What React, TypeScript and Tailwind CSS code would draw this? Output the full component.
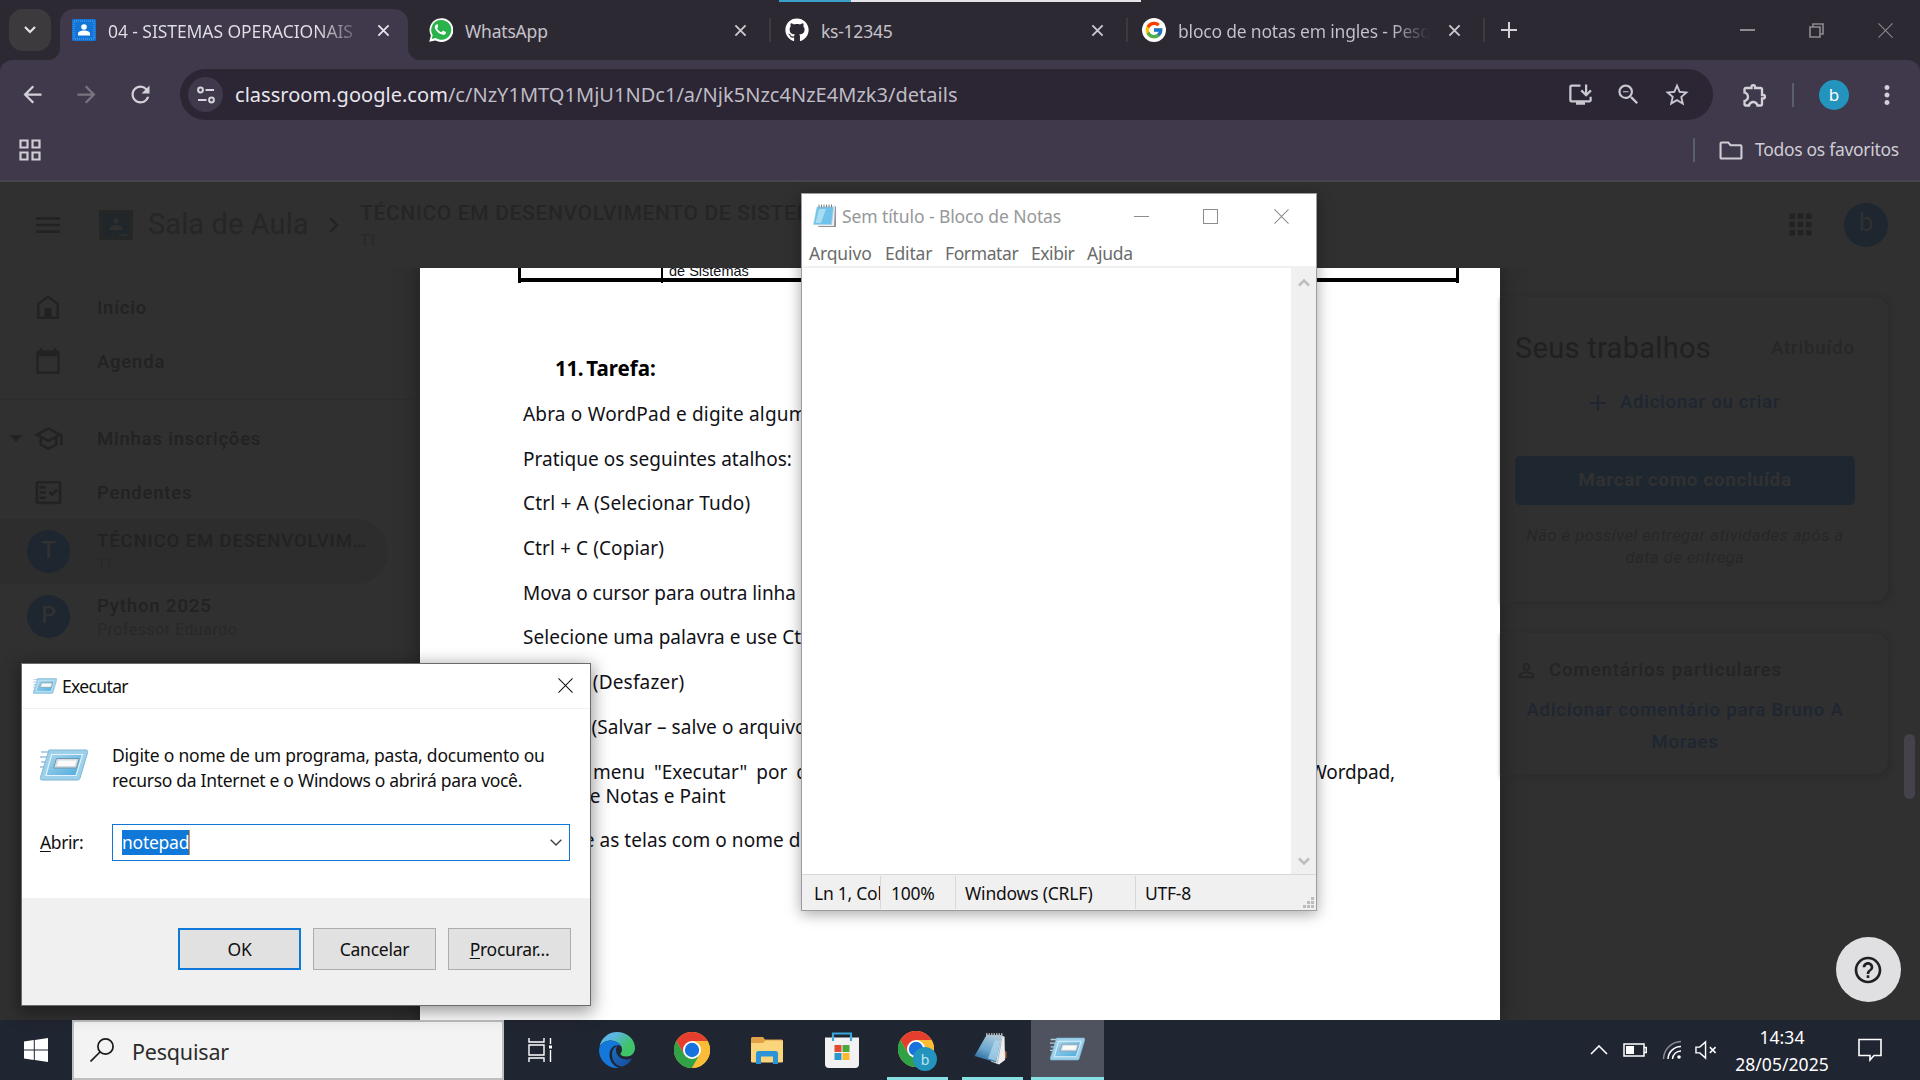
import React from "react";
import { FaGithub } from "react-icons/fa";
import { FcGoogle } from "react-icons/fc";
import {
  MdOutlineInstallDesktop,
  MdZoomOut,
  MdStarOutline,
  MdOutlineExtension,
  MdMoreVert,
  MdArrowBack,
  MdArrowForward,
  MdRefresh,
  MdMenu,
  MdApps,
  MdOutlineSchool,
  MdOutlineFactCheck,
  MdPersonOutline,
  MdHelpOutline,
  MdArrowDropDown,
  MdCalendarToday,
} from "react-icons/md";

/* ---------- drawings ---------- */

function CloseX({ className = "" }: { className?: string }) {
  return (
    <svg viewBox="0 0 14 14" className={className} fill="none" stroke="currentColor" strokeWidth="2">
      <path d="M1.5 1.5l11 11M12.5 1.5l-11 11" />
    </svg>
  );
}

function ThinX({ className = "" }: { className?: string }) {
  return (
    <svg viewBox="0 0 16 16" className={className} fill="none" stroke="currentColor" strokeWidth="1.1">
      <path d="M.5.5l15 15M15.5.5l-15 15" />
    </svg>
  );
}

function WhatsAppIcon() {
  return (
    <svg viewBox="0 0 24 24" className="size-6">
      <path fill="#fff" d="M.2 23.8l1.7-6.2A11.9 11.9 0 1112.1 24a12 12 0 01-5.7-1.5z" />
      <path fill="#29b34a" d="M12.1 2a9.9 9.9 0 00-8.4 15.1l-1 3.9 4-1A9.9 9.9 0 1012.1 2z" />
      <path
        fill="#fff"
        d="M8.9 6.9c-.3-.6-.5-.6-.8-.6-.6 0-1 .2-1.4.7-.5.6-.9 1.300-.8 2.400.1 1.100.8 2.200 1 2.500.2.200 1.900 3 4.700 4.100 2.300.9 2.800.700 3.300.700.500-.1 1.600-.700 1.900-1.300.2-.700.2-1.200.1-1.300l-2.600-1.300c-.3-.1-.5-.1-.7.1l-1 1.200c-.2.200-.3.200-.6.100-1.800-.8-3-2-3.800-3.600-.1-.3 0-.400.100-.600l.700-.9c.1-.2.100-.300 0-.5z"
      />
    </svg>
  );
}

function ClassroomFavicon() {
  return (
    <svg viewBox="0 0 24 22" className="h-[22px] w-6 shrink-0">
      <rect width="24" height="22" rx="1.500" fill="#1275d8" />
      <rect x="2" y="2" width="20" height="18" fill="none" stroke="#5fa5ea" strokeWidth="1" strokeDasharray="1 1" />
      <circle cx="12" cy="8" r="2.800" fill="#fff" />
      <path d="M6 16.500v-1.800c0-2 3-3.200 6-3.200s6 1.200 6 3.200v1.800z" fill="#fff" />
    </svg>
  );
}

function TuneIcon() {
  return (
    <svg viewBox="0 0 20 20" className="size-5" fill="none" stroke="#d6d4dc" strokeWidth="2">
      <circle cx="4.500" cy="5" r="2.400" />
      <path d="M9.500 5H18M2 15h8.500" />
      <circle cx="15.500" cy="15" r="2.400" />
    </svg>
  );
}

function ChromeIcon({ className = "" }: { className?: string }) {
  return (
    <svg viewBox="0 0 48 48" className={className}>
      <circle cx="24" cy="24" r="24" fill="#fbc02d" />
      <path d="M3.200 12A24 24 0 0144.800 12H24L13.600 30z" fill="#e53e2f" />
      <path d="M3.200 12A24 24 0 0024 48l10.400-18-20.800 0z" fill="#2fa146" />
      <path d="M44.800 12A24 24 0 0124 48l10.400-18L33 14l-9-2z" fill="#fbbd36" />
      <circle cx="24" cy="24" r="12" fill="#fff" />
      <circle cx="24" cy="24" r="9.600" fill="#1673de" />
    </svg>
  );
}

function EdgeIcon() {
  return (
    <svg viewBox="0 0 36 36" className="size-9">
      <defs>
        <linearGradient id="edgeTop" x1="0" y1="0" x2="1" y2="0.700">
          <stop offset="0.350" stopColor="#5bb5e2" />
          <stop offset="0.800" stopColor="#3fc36a" />
        </linearGradient>
        <linearGradient id="edgeDark" x1="0" y1="0" x2="1" y2="1">
          <stop offset="0" stopColor="#1a6fc0" />
          <stop offset="1" stopColor="#174a9c" />
        </linearGradient>
      </defs>
      <path d="M.5 15C2 6 9.500 0 18 0c10 0 18 7 18 16 0 5-4 8.500-8.500 8.500-4 0-6-1.500-6-2.500s1.500-1.500 1.500-4.500C23 12 17 8.500 11.500 8.500 6 8.500 2 11.500.5 15z" fill="url(#edgeTop)" />
      <path d="M0 18c.5-6 5.500-9.500 11.500-9.500 5 0 9 2.500 11 6-1-.8-2.500-1.200-4-1.200-5 0-8 4.700-8 9.700 0 6 4 11 9 13C9 36.800 0 28.500 0 18z" fill="#1378da" />
      <path d="M18.500 14c-3.500 1-5.500 4.500-5.500 8.500 0 7 5 12.500 11 12 4-1.500 7.200-4.500 9-8-8 3-16-1-16-8.500 0-2 .5-3 1.500-4z" fill="url(#edgeDark)" />
    </svg>
  );
}

function FolderIcon() {
  return (
    <svg viewBox="0 0 32 28" className="h-7 w-8">
      <path d="M0 2.500A1.500 1.500 0 011.500 1H12l2 2.500h16.500A1.500 1.500 0 0132 5v21H0z" fill="#e0a147" />
      <path d="M0 7h12l2.500-2.500H32V25a1.500 1.500 0 01-1.500 1.500h-29A1.500 1.500 0 010 25z" fill="#fbd57c" />
      <path d="M5 28V17.500A2.500 2.500 0 017.500 15h17a2.500 2.500 0 012.500 2.500V28h-5v-7.500H10V28z" fill="#2b93d6" />
    </svg>
  );
}

function StoreIcon() {
  return (
    <svg viewBox="0 0 36 36" className="size-9">
      <path d="M9 8V1.500h18V8" fill="none" stroke="#3aa7dc" strokeWidth="2.200" />
      <path d="M1 5.500h34V32a4 4 0 01-4 4H5a4 4 0 01-4-4z" fill="#f2f2f2" />
      <path d="M9 9V5.500M27 9V5.500" stroke="#3aa7dc" strokeWidth="2.200" />
      <rect x="10.500" y="13" width="7" height="7" fill="#e04a33" />
      <rect x="18.500" y="13" width="7" height="7" fill="#4aa83a" />
      <rect x="10.500" y="21" width="7" height="7" fill="#2b97cf" />
      <rect x="18.500" y="21" width="7" height="7" fill="#fbb92d" />
    </svg>
  );
}

function RunIcon({ className = "" }: { className?: string }) {
  return (
    <svg viewBox="0 0 48 32" className={className}>
      <defs>
        <linearGradient id="runFace" x1="0" y1="0" x2="1" y2="1">
          <stop offset="0" stopColor="#a9d7ee" />
          <stop offset="1" stopColor="#4eabdd" />
        </linearGradient>
      </defs>
      <path d="M1 3h12M0 8h11M1 13h9M0 18h9" stroke="#b4cfdf" strokeWidth="1.800" />
      <path d="M9 1h37c1.500 0 2 1 1.600 2.500L40 29c-.4 1.500-1 2-2.500 2H2c-1.500 0-2-1-1.600-2.500z" fill="#9dd0ea" stroke="#7fb6d3" strokeWidth="1" />
      <path d="M11.500 5.500h31l-6.500 21H6z" fill="url(#runFace)" stroke="#e4f3fa" strokeWidth="1.200" />
      <path d="M16.500 9.500H39L36.500 19H13.500z" fill="#d3dce2" stroke="#6f96ad" strokeWidth="1" />
      <path d="M18.500 11.500h18L34.500 17H16.500z" fill="#fafafa" />
    </svg>
  );
}

function NotepadIcon() {
  return (
    <svg viewBox="0 0 24 24" className="size-6">
      <path d="M5 23h18V2.500L21 1.500z" fill="#9a8f95" />
      <path d="M4 22h17L22 2H7z" fill="#e8eef2" />
      <path d="M4 3h16.500L18.500 20.500H.5z" fill="#6fc3ea" stroke="#a9cfe0" strokeWidth=".6" />
      <path d="M6 5h7L8 19H2.500z" fill="#a9dcf3" />
      <path d="M6 .5v3M8.500.5v3M11 .5v3M13.500.5v3M16 .5v3M18.500.5v3" stroke="#7c8388" strokeWidth="1" />
    </svg>
  );
}

function NotepadTaskIcon() {
  return (
    <svg viewBox="0 0 34 34" className="size-[34px]">
      <defs>
        <linearGradient id="padFace" x1="0.600" y1="0" x2="0.200" y2="1">
          <stop offset="0" stopColor="#a9c6d8" />
          <stop offset="0.500" stopColor="#6da9cf" />
          <stop offset="1" stopColor="#235f93" />
        </linearGradient>
      </defs>
      <path d="M30 18l2.500 2v6l-2.500 1z" fill="#b06a3a" />
      <path d="M26 3.500l4.500 1L31 28l-6 4.500-8-3z" fill="#eceeef" />
      <path d="M28 5l-4.500 26" stroke="#b4b8bc" strokeWidth="1" />
      <path d="M12.500 3H28l-6 27.500L.5 24z" fill="url(#padFace)" />
      <path d="M21 8l5 1-4 20-8-2.500z" fill="#b4daee" opacity=".7" />
      <path d="M12 2.500h17" stroke="#b9b9b9" strokeWidth="2.500" strokeDasharray="1.500 1" />
    </svg>
  );
}

/* ---------- browser ---------- */

function TabStrip() {
  return (
    <div className="relative flex h-[60px] shrink-0 bg-[#2d2933]">
      <div className="ml-[9px] mt-[9px] flex h-[42px] w-[42px] items-center justify-center rounded-[14px] bg-[#3c3a3d]">
        <svg viewBox="0 0 12 8" className="h-2 w-3" fill="none" stroke="#e5e5e8" strokeWidth="2.200">
          <path d="M1 1l5 5 5-5" />
        </svg>
      </div>
      <div className="relative ml-[9px] mt-[9px] flex h-[51px] w-[348px] items-center rounded-t-[14px] bg-[#40384b] pb-[9px] pl-3">
        <svg viewBox="0 0 12 12" className="absolute bottom-0 -left-3 size-3">
          <path d="M12 0v12H0A12 12 0 0012 0z" fill="#40384b" />
        </svg>
        <svg viewBox="0 0 12 12" className="absolute -right-3 bottom-0 size-3">
          <path d="M0 0v12h12A12 12 0 010 0z" fill="#40384b" />
        </svg>
        <ClassroomFavicon />
        <div className="mt-[3px] ml-3 w-[246px] overflow-hidden bg-linear-to-r from-[#e2e0e6] from-85% to-[#6b6475] bg-clip-text text-[17.5px] tracking-[-0.08px] whitespace-nowrap text-transparent">
          04 - SISTEMAS OPERACIONAIS
        </div>
        <CloseX className="ml-[23px] size-[13px] text-[#e5e3e9]" />
      </div>
      <div className="flex w-[361px] items-center pl-[21px]">
        <WhatsAppIcon />
        <span className="ml-3 w-[269px] pt-[3px] text-[17.5px] tracking-[-0.2px] text-[#c5c2cb]">WhatsApp</span>
        <CloseX className="size-[13px] text-[#cbc9d0]" />
      </div>
      <div className="mt-[18px] h-6 w-[2px] bg-[#3e3a40]" />
      <div className="flex w-[355px] items-center pl-[14px]">
        <FaGithub className="size-6 text-white" />
        <span className="ml-3 w-[270px] pt-[3px] text-[17.5px] tracking-[-0.25px] text-[#c5c2cb]">ks-12345</span>
        <CloseX className="size-[13px] text-[#cbc9d0]" />
      </div>
      <div className="mt-[18px] h-6 w-[2px] bg-[#3e3a40]" />
      <div className="flex w-[355px] items-center pl-[14px]">
        <span className="flex size-6 items-center justify-center rounded-full bg-white">
          <FcGoogle className="size-5" />
        </span>
        <div className="ml-3 w-[252px] overflow-hidden bg-linear-to-r from-[#c5c2cb] from-85% to-[#2d2933] bg-clip-text pt-[3px] text-[17.5px] tracking-[-0.2px] whitespace-nowrap text-transparent">
          bloco de notas em ingles - Pesquisa
        </div>
        <CloseX className="ml-[18px] size-[13px] text-[#cbc9d0]" />
      </div>
      <div className="mt-[18px] h-6 w-[2px] bg-[#3e3a40]" />
      <svg viewBox="0 0 16 16" className="mt-[22px] ml-4 size-4" stroke="#d5d3da" strokeWidth="2">
        <path d="M8 0v16M0 8h16" />
      </svg>
      <div className="mr-[27px] ml-auto flex items-center gap-[54px] text-[#8e8b92]">
        <div className="h-[2px] w-[15px] bg-[#8e8b92]" />
        <svg viewBox="0 0 15 15" className="size-[15px]" fill="none" stroke="currentColor" strokeWidth="1.600">
          <path d="M1 4h10v10H1zM4 4V1h10v10h-3" />
        </svg>
        <ThinX className="size-[15px]" />
      </div>
      <div className="absolute top-0 left-[779px] flex h-[2px] w-[362px] bg-[#e4e4e9]">
        <div className="w-[72px] bg-[#3ba0cb]" />
      </div>
    </div>
  );
}

function Toolbar() {
  return (
    <div className="h-[122px] shrink-0 bg-[#2d2933]">
      <div className="flex h-full flex-col rounded-t-[12px] border-b-2 border-[#4a4650] bg-[#40384b]">
        <div className="flex h-[69px] items-center text-[#d3d1d8]">
          <MdArrowBack className="ml-[19px] size-[27px]" />
          <MdArrowForward className="ml-[27px] size-[27px] text-[#79747f]" />
          <MdRefresh className="ml-[27px] size-[27px]" />
          <div className="ml-[26px] flex h-[51px] w-[1533px] items-center rounded-full bg-[#2b2534]">
            <div className="ml-2 flex size-[35px] items-center justify-center rounded-full bg-[#40384b]">
              <TuneIcon />
            </div>
            <div className="ml-[12px] text-[20px] tracking-[0.03px] whitespace-nowrap text-[#bfbcc4]">
              <span className="text-[#e8e6ec]">classroom.google.com</span>/c/NzY1MTQ1MjU1NDc1/a/Njk5Nzc4NzE4Mzk3/details
            </div>
            <div className="mr-[22px] ml-auto flex items-center gap-[21px] text-[#cac8cf]">
              <MdOutlineInstallDesktop className="size-[27px]" />
              <MdZoomOut className="size-[27px]" />
              <MdStarOutline className="size-[28px]" />
            </div>
          </div>
          <MdOutlineExtension className="ml-[28px] size-[28px]" />
          <div className="ml-[23px] h-6 w-[2px] bg-[#58606e]" />
          <div className="ml-[25px] flex size-[30px] items-center justify-center rounded-full bg-[#2394bd] text-[17px] text-white">b</div>
          <MdMoreVert className="ml-[23px] size-[30px]" />
        </div>
        <div className="flex h-[42px] items-center text-[#cfcdd4]">
          <svg viewBox="0 0 22 22" className="ml-[19px] size-[22px]" fill="none" stroke="currentColor" strokeWidth="2.200">
            <path d="M1.500 1.500h7v7h-7zM13.500 1.500h7v7h-7zM1.500 13.500h7v7h-7zM13.500 13.500h7v7h-7z" />
          </svg>
          <div className="ml-auto h-6 w-[2px] bg-[#58606e]" />
          <svg viewBox="0 0 24 20" className="ml-6 h-[19px] w-6" fill="none" stroke="currentColor" strokeWidth="2.200">
            <path d="M2 1.500h7l2.500 3H22c.600 0 1 .400 1 1v12c0 .600-.400 1-1 1H2c-.600 0-1-.400-1-1v-15c0-.600.400-1 1-1z" />
          </svg>
          <span className="mr-[21px] ml-3 w-[144px] pb-px text-[17.500px] tracking-[-0.300px] whitespace-nowrap">Todos os favoritos</span>
        </div>
      </div>
    </div>
  );
}

/* ---------- dimmed classroom page ---------- */

function PageHeader() {
  return (
    <div className="flex h-[86px] shrink-0 items-center border-b border-[#2e2e2e] text-[#222]">
      <MdMenu className="ml-[32px] size-8" />
      <svg viewBox="0 0 34 30" className="ml-[35px] h-[30px] w-[34px]">
        <rect width="34" height="30" rx="2" fill="#252626" />
        <rect x="4" y="4" width="26" height="22" fill="#21262a" />
        <circle cx="17" cy="11" r="2.500" fill="#303030" />
        <path d="M10.500 20v-1.500c0-2 3.500-3.300 6.500-3.300s6.500 1.300 6.500 3.300V20z" fill="#303030" />
        <path d="M20 25h8" stroke="#303030" strokeWidth="1.500" />
      </svg>
      <span className="ml-[15px] w-[161px] font-[Roboto] text-[29px] tracking-[0.100px] whitespace-nowrap text-[#262626]">Sala de Aula</span>
      <svg viewBox="0 0 10 16" className="ml-[20px] h-4 w-[10px]" fill="none" stroke="currentColor" strokeWidth="2">
        <path d="M1 1l7 7-7 7" />
      </svg>
      <div className="ml-[21px] pt-[3px] font-[Roboto] leading-none text-[#252525]">
        <div className="text-[21px] font-medium tracking-[0.650px]">TÉCNICO EM DESENVOLVIMENTO DE SISTEMAS</div>
        <div className="mt-2 text-[17px] tracking-[0.500px] text-[#282828]">TI</div>
      </div>
      <MdApps className="ml-auto size-[33px]" />
      <div className="mr-8 ml-[27px] flex size-11 items-center justify-center rounded-full bg-[#1e2730] pb-1 font-[Roboto] text-[26px] text-[#303030]">b</div>
    </div>
  );
}

function SideItem({ icon, label }: { icon: React.ReactNode; label: string }) {
  return (
    <div className="flex h-[54px] items-center">
      <div className="flex w-[97px] justify-center pr-px">{icon}</div>
      <span className="pt-[3px] font-[Roboto] text-[18.500px] font-medium tracking-[0.800px]">{label}</span>
    </div>
  );
}

function CourseItem({ letter, title, sub, active }: { letter: string; title: string; sub: string; active?: boolean }) {
  return (
    <div className={active ? "flex h-[65px] w-[388px] items-center rounded-r-full bg-[#2d2d2d]" : "flex h-[65px] w-[388px] items-center"}>
      <div className="ml-[27px] flex size-[43px] shrink-0 items-center justify-center rounded-full bg-[#1e2730] font-[Roboto] text-[23px] font-medium text-[#313131]">
        {letter}
      </div>
      <div className="ml-[27px] pt-[2px] font-[Roboto] leading-none">
        <div className="text-[18.500px] font-medium tracking-[0.880px] whitespace-nowrap">{title}</div>
        <div className="mt-[6px] text-[16px] tracking-[0.480px] text-[#282828]">{sub}</div>
      </div>
    </div>
  );
}

function Sidebar() {
  return (
    <div className="w-[420px] shrink-0 overflow-hidden text-[#222]">
      <div className="h-[132px] border-b border-[#2c2c2c] pt-[12px]">
        <SideItem
          icon={
            <svg viewBox="0 0 22 24" className="h-6 w-[22px]" fill="none" stroke="currentColor" strokeWidth="2.400">
              <path d="M1.200 22.800V9L11 1.500 20.800 9v13.800z" />
              <path d="M7.500 13h7v10h-7z" fill="currentColor" stroke="none" />
            </svg>
          }
          label="Início"
        />
        <SideItem icon={<MdCalendarToday className="size-[28px]" />} label="Agenda" />
      </div>
      <div className="relative pt-[11px]">
        <MdArrowDropDown className="absolute top-[22px] left-0 size-8" />
        <SideItem icon={<MdOutlineSchool className="size-[31px]" />} label="Minhas inscrições" />
        <SideItem icon={<MdOutlineFactCheck className="size-[31px]" />} label="Pendentes" />
        <CourseItem letter="T" title="TÉCNICO EM DESENVOLVIM…" sub="TI" active />
        <CourseItem letter="P" title="Python 2025" sub="Professor Eduardo" />
      </div>
    </div>
  );
}

function DocLine({ children, className = "" }: { children: React.ReactNode; className?: string }) {
  return <p className={`h-[44.7px] leading-[24px] whitespace-nowrap ${className}`}>{children}</p>;
}

function DocumentPage() {
  return (
    <div className="w-[1080px] shrink-0 overflow-hidden bg-white pl-[98px] text-[#111116] shadow-[0_0_16px_4px_#242424]">
      <div className="flex h-[15px] w-[941px] justify-between">
        <div className="relative h-full w-full border-x-[3px] border-black">
          <div className="absolute top-[10px] h-1 w-full bg-black" />
          <div className="absolute left-[140px] h-full w-[2px] bg-black" />
          <div className="absolute -top-[5px] left-[148px] font-['Liberation_Sans'] text-[14.500px] leading-4 whitespace-nowrap">de Sistemas</div>
        </div>
      </div>
      <div className="mt-[73px] ml-[37px] flex h-[46px] gap-[3px] text-[20.500px] leading-[24px] font-bold text-black">
        <span className="tracking-[-0.300px]">11.</span>
        <span>Tarefa:</span>
      </div>
      <div className="ml-[5px] w-[872px] text-[19px]">
        <DocLine className="tracking-[0.190px]">Abra o WordPad e digite algumas linhas</DocLine>
        <DocLine className="tracking-[0.030px]">Pratique os seguintes atalhos:</DocLine>
        <DocLine className="tracking-[0.170px]">Ctrl + A (Selecionar Tudo)</DocLine>
        <DocLine className="tracking-[0.100px]">Ctrl + C (Copiar)</DocLine>
        <DocLine className="tracking-[-0.060px]">Mova o cursor para outra linha e use</DocLine>
        <DocLine className="tracking-[0.060px]">Selecione uma palavra e use Ctrl + X</DocLine>
        <DocLine className="tracking-[0.180px]">Ctrl + Z (Desfazer)</DocLine>
        <DocLine className="tracking-[0.080px]">Ctrl + S (Salvar – salve o arquivo)</DocLine>
        <div className="flex h-6 leading-[24px] whitespace-nowrap">
          <span className="w-[70px]">Abra o</span>
          <span className="[word-spacing:4px]">menu "Executar" por comando</span>
          <span className="ml-auto tracking-[-0.150px]">Wordpad,</span>
        </div>
        <DocLine className="tracking-[0.100px]">Bloco de Notas e Paint</DocLine>
        <DocLine className="tracking-[0.050px]">Capture as telas com o nome de</DocLine>
      </div>
    </div>
  );
}

function RightPanel() {
  return (
    <div className="relative w-[420px] shrink-0 font-[Roboto]">
      <div className="mt-[28px] flex h-[306px] w-[389px] flex-col rounded-r-[14px] border border-l-0 border-[#2d2d2d] pr-[33px] pl-[15px] shadow-[2px_2px_5px_#2b2b2b]">
        <div className="mt-[30px] flex items-center justify-between">
          <span className="text-[29px] tracking-[0.300px] text-[#202020]">Seus trabalhos</span>
          <span className="text-[18.500px] font-medium tracking-[0.900px] text-[#272727]">Atribuído</span>
        </div>
        <div className="mt-[9px] flex h-[47px] shrink-0 items-center justify-center gap-[14px] rounded-[4px] border border-[#2e2e2e] text-[18.500px] font-medium tracking-[0.750px] text-[#1e2632]">
          <svg viewBox="0 0 16 16" className="size-4" stroke="currentColor" strokeWidth="2">
            <path d="M8 0v16M0 8h16" />
          </svg>
          Adicionar ou criar
        </div>
        <div className="mt-[29px] flex h-[49px] shrink-0 items-center justify-center rounded-[5px] bg-[#1e2730] text-[19px] font-bold tracking-[0.600px] text-[#313131]">
          Marcar como concluída
        </div>
        <div className="mt-[20px] text-center text-[16.500px] leading-[22px] tracking-[0.500px] text-[#272727] italic">
          Não é possível entregar atividades após a
          <br />
          data de entrega
        </div>
      </div>
      <div className="mt-[30px] h-[143px] w-[389px] rounded-r-[14px] border border-l-0 border-[#2d2d2d] pr-[33px] pl-[15px] shadow-[2px_2px_5px_#2b2b2b]">
        <div className="mt-[25px] flex items-center gap-[11px] text-[18.500px] leading-6 font-medium tracking-[0.980px] text-[#242424]">
          <MdPersonOutline className="size-[23px]" />
          Comentários particulares
        </div>
        <div className="mt-3 text-center text-[18.500px] leading-8 font-medium tracking-[0.820px] text-[#1e2632]">
          Adicionar comentário para Bruno A<br />
          Moraes
        </div>
      </div>
      <div className="absolute top-[466px] left-[404px] h-[65px] w-[11px] rounded-full bg-[#45424b]" />
      <div className="absolute top-[669px] left-[336px] flex size-[65px] items-center justify-center rounded-full bg-[#e0e0e2] pr-px">
        <MdHelpOutline className="size-8 text-[#202024]" />
      </div>
    </div>
  );
}

/* ---------- desktop windows ---------- */

function NotepadWindow() {
  return (
    <div className="absolute top-[193px] left-[801px] flex h-[718px] w-[516px] flex-col border border-[#9c9ca0] bg-white text-[17.500px] tracking-[-0.250px] shadow-[0_3px_14px_rgba(0,0,0,0.350)]">
      <div className="flex h-[44px] shrink-0 items-center text-[#969899]">
        <span className="ml-[11px]">
          <NotepadIcon />
        </span>
        <span className="ml-[5px] w-[292px] tracking-[-0.100px] whitespace-nowrap">Sem título - Bloco de Notas</span>
        <div className="h-px w-[15px] bg-[#8b8b90]" />
        <div className="ml-[54px] size-[15px] border border-[#8b8b90]" />
        <ThinX className="ml-[56px] size-[15px] text-[#8b8b90]" />
      </div>
      <div className="flex h-[30px] shrink-0 items-center border-b-2 border-[#f0f0f0] pt-[3px] text-[#6a6c6c]">
        <span className="ml-[7px] w-[76px] tracking-[-0.150px]">Arquivo</span>
        <span className="w-[60px] tracking-[-0.200px]">Editar</span>
        <span className="w-[86px] tracking-[-0.400px]">Formatar</span>
        <span className="w-[56px] tracking-[-0.450px]">Exibir</span>
        <span>Ajuda</span>
      </div>
      <div className="flex min-h-0 flex-1">
        <div className="flex-1" />
        <div className="flex w-[25px] flex-col items-center justify-between bg-[#f0f0f0] pt-[10px] pb-[8px]">
          <svg viewBox="0 0 12 9" className="h-[9px] w-3" fill="none" stroke="#bdbdbd" strokeWidth="2.500">
            <path d="M1 7.500l5-5 5 5" />
          </svg>
          <svg viewBox="0 0 12 9" className="h-[9px] w-3" fill="none" stroke="#bdbdbd" strokeWidth="2.500">
            <path d="M1 1.500l5 5 5-5" />
          </svg>
        </div>
      </div>
      <div className="relative flex h-[36px] shrink-0 border-t border-[#d8d8d8] bg-[#f0f0f0] leading-[34px] whitespace-nowrap text-[#101010]">
        <div className="my-px w-[79px] overflow-hidden border-r border-[#d8d8d8] pl-3">Ln 1, Col 1</div>
        <div className="my-px w-[75px] border-r border-[#d8d8d8] pl-[10px]">100%</div>
        <div className="my-px w-[180px] border-r border-[#d8d8d8] pl-[9px] tracking-[-0.200px]">Windows (CRLF)</div>
        <div className="my-px pl-[9px]">UTF-8</div>
        <svg viewBox="0 0 11 11" className="absolute right-[2px] bottom-[2px] size-[11px]" fill="#bcbcbc">
          <path d="M8 0h3v3H8zM4 4h3v3H4zM8 4h3v3H8zM0 8h3v3H0zM4 8h3v3H4zM8 8h3v3H8z" />
        </svg>
      </div>
    </div>
  );
}

function RunDialog() {
  return (
    <div className="absolute top-[663px] left-[21px] flex h-[343px] w-[570px] flex-col border border-[#6a6a6c] bg-white text-[17.500px] tracking-[-0.250px] text-[#101010] shadow-[0_4px_16px_2px_rgba(0,0,0,0.400)]">
      <div className="flex h-[45px] shrink-0 items-center border-b border-[#f0f0f0]">
        <RunIcon className="ml-[11px] h-4 w-6" />
        <span className="ml-[5px] tracking-[-0.650px]">Executar</span>
        <ThinX className="mr-[17px] mb-px ml-auto size-[15px]" />
      </div>
      <div className="flex-1">
        <div className="flex pt-[34px]">
          <RunIcon className="mt-[6px] ml-[18px] h-8 w-12" />
          <p className="ml-6 leading-[25px] tracking-[-0.220px] whitespace-nowrap">
            Digite o nome de um programa, pasta, documento ou
            <br />
            <span className="tracking-[-0.300px]">recurso da Internet e o Windows o abrirá para você.</span>
          </p>
        </div>
        <div className="mt-[31px] flex items-center">
          <span className="ml-[18px] w-[72px] tracking-[-0.400px]">
            <span className="underline underline-offset-2">A</span>brir:
          </span>
          <div className="flex h-[37px] w-[458px] items-center border border-[#0f75d6] pl-[9px]">
            <span className="h-[25px] w-[68px] border-r border-[#e08a35] bg-[#0f78d8] leading-[25px] text-white">notepad</span>
            <svg viewBox="0 0 12 7" className="mr-[7px] ml-auto h-[7px] w-3" fill="none" stroke="#404044" strokeWidth="1.400">
              <path d="M.7.700L6 6 11.300.700" />
            </svg>
          </div>
        </div>
      </div>
      <div className="flex h-[107px] shrink-0 justify-end gap-3 bg-[#f0f0f0] pt-[30px] pr-[19px]">
        <div className="flex h-[42px] w-[123px] items-center justify-center border-2 border-[#0f78d8] bg-[#e1e1e1]">OK</div>
        <div className="flex h-[42px] w-[123px] items-center justify-center border border-[#adadad] bg-[#e1e1e1]">Cancelar</div>
        <div className="flex h-[42px] w-[123px] items-center justify-center border border-[#adadad] bg-[#e1e1e1]">
          <span className="underline underline-offset-2">P</span>rocurar...
        </div>
      </div>
    </div>
  );
}

/* ---------- taskbar ---------- */

function Taskbar() {
  return (
    <div className="relative flex h-[60px] shrink-0 items-center bg-[#202532] text-white">
      <div className="flex w-[72px] justify-center">
        <svg viewBox="0 0 24 24" className="size-6" fill="#fff">
          <path d="M0 3.400L9.800 2v9.500H0zM10.800 1.900L24 0v11.500H10.800zM0 12.500h9.800V22L0 20.600zM10.800 12.500H24V24l-13.200-1.900z" />
        </svg>
      </div>
      <div className="flex h-full w-[432px] items-center border-2 border-[#bfbfbf] bg-[#f3f3f3] pb-px">
        <svg viewBox="0 0 24 24" className="ml-4 size-6" fill="none" stroke="#1a1a1a" strokeWidth="1.700">
          <circle cx="15.500" cy="8.500" r="7.600" />
          <path d="M10 14L.5 23.500" />
        </svg>
        <span className="ml-[18px] pt-[6px] text-[21.500px] tracking-[-0.200px] text-[#2b2b2b]">Pesquisar</span>
      </div>
      <div className="flex w-[72px] justify-center">
        <svg viewBox="0 0 24 24" className="size-6" fill="none" stroke="#fff" strokeWidth="1.400">
          <path d="M1 0v4h15V0M1 7h15v10H1zM1 24v-4h15v4M22.500 0v6M22.500 12v12" />
          <path d="M21 7.500h3v3h-3z" fill="#fff" stroke="none" />
        </svg>
      </div>
      <div className="ml-px flex w-[78px] justify-center pl-px">
        <EdgeIcon />
      </div>
      <div className="flex w-[74px] justify-center">
        <ChromeIcon className="size-9" />
      </div>
      <div className="flex w-[76px] justify-center">
        <FolderIcon />
      </div>
      <div className="flex w-[74px] justify-center">
        <StoreIcon />
      </div>
      <div className="relative ml-[8px] flex h-full w-[61px] items-center justify-center border-b-[3px] border-[#86e0e3]">
        <ChromeIcon className="mr-[3px] size-9" />
        <div className="absolute top-[27px] left-[26px] flex size-6 items-center justify-center rounded-full bg-[#2394bd] text-[14px] text-[#bfe6f2]">b</div>
      </div>
      <div className="ml-[14px] flex h-full w-[61px] items-center justify-center border-b-[3px] border-[#86e0e3] pr-1">
        <NotepadTaskIcon />
      </div>
      <div className="ml-2 flex h-full w-[73px] items-center justify-center border-b-[3px] border-[#86e0e3] bg-[#4f525f]">
        <RunIcon className="h-6 w-[35px]" />
      </div>
      <div className="mr-[38px] ml-auto flex items-center">
        <svg viewBox="0 0 18 10" className="h-[10px] w-[18px]" fill="none" stroke="#fff" strokeWidth="1.600">
          <path d="M1 9l8-8 8 8" />
        </svg>
        <svg viewBox="0 0 24 14" className="ml-[15px] h-[14px] w-6">
          <path d="M1 1h20v12H1zM21 4.500h2.300v5H21" fill="none" stroke="#fff" strokeWidth="1.500" />
          <path d="M3 3h8v8H3z" fill="#fff" />
        </svg>
        <svg viewBox="0 0 20 20" className="ml-[15px] size-5" fill="none" stroke="#fff" strokeWidth="1.500">
          <path d="M1.500 19A18 18 0 0119 1.500" stroke="#8b8e97" />
          <path d="M6 19A13 13 0 0119 6.500M10.500 19a8.500 8.500 0 018.500-8" />
          <circle cx="17" cy="17" r="1.800" fill="#fff" stroke="none" />
        </svg>
        <svg viewBox="0 0 24 20" className="ml-[13px] h-5 w-[23px]" fill="none" stroke="#fff" strokeWidth="1.500">
          <path d="M1 7h4l6-5.500v17L5 13H1zM15.500 7l6 6M21.500 7l-6 6" />
        </svg>
        <div className="mr-4 ml-[14px] w-[100px] pt-px text-center text-[17.500px] leading-[27px] tracking-[0.050px] whitespace-nowrap">
          14:34
          <br />
          28/05/2025
        </div>
        <svg viewBox="0 0 24 24" className="ml-[10px] size-6" fill="none" stroke="#fff" strokeWidth="1.600">
          <path d="M1 1.500h22v16H16l-4 4.500v-4.500H1z" />
        </svg>
      </div>
    </div>
  );
}

export default function App() {
  return (
    <div className="relative flex h-[1080px] w-[1920px] flex-col overflow-hidden bg-[#303030] font-['Noto_Sans',sans-serif]">
      <TabStrip />
      <Toolbar />
      <div className="flex min-h-0 flex-1 flex-col overflow-hidden">
        <PageHeader />
        <div className="flex min-h-0 flex-1 overflow-hidden">
          <Sidebar />
          <DocumentPage />
          <RightPanel />
        </div>
      </div>
      <Taskbar />
      <NotepadWindow />
      <RunDialog />
    </div>
  );
}
